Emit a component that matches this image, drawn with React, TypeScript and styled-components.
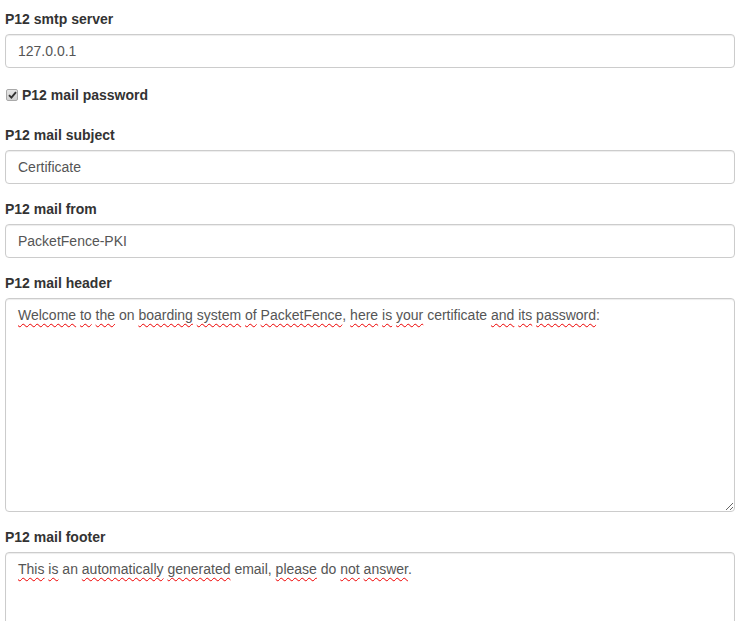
import React from 'react';
import styled, { createGlobalStyle } from 'styled-components';

const GlobalStyle = createGlobalStyle`
  html, body {
    margin: 0;
    padding: 0;
    overflow: hidden;
    background: #fff;
  }
  body {
    font-family: "Liberation Sans", Arial, sans-serif;
    font-size: 14px;
    line-height: 20px;
    color: #333;
  }
  * {
    box-sizing: border-box;
  }
`;

const Form = styled.form`
  display: flex;
  flex-direction: column;
  padding: 9px 11px 0 5px;
`;

const Group = styled.div`
  display: flex;
  flex-direction: column;
  margin-bottom: 15px;
`;

const Label = styled.label`
  display: block;
  font-weight: bold;
  margin-bottom: 5px;
`;

const Input = styled.input`
  display: block;
  width: 100%;
  height: 34px;
  padding: 6px 12px;
  font-family: inherit;
  font-size: 14px;
  line-height: 20px;
  color: #555;
  background: #fff;
  border: 1px solid #ccc;
  border-radius: 4px;
  box-shadow: inset 0 1px 1px rgba(0, 0, 0, 0.075);
  outline: none;
`;

const CheckRow = styled.label`
  display: flex;
  align-items: center;
  gap: 4px;
  height: 20px;
  margin: 2px 0 20px 1px;
  font-weight: bold;
`;

const CheckBox = styled.span`
  display: flex;
  align-items: center;
  justify-content: center;
  width: 12px;
  height: 12px;
  border: 1px solid #a9a9a9;
  border-radius: 2px;
  background: linear-gradient(#e6e6e6, #d2d2d2);
`;

const TextArea = styled.div`
  width: 100%;
  height: 214px;
  padding: 6px 12px;
  color: #555;
  background: #fff;
  border: 1px solid #ccc;
  border-radius: 4px;
  box-shadow: inset 0 1px 1px rgba(0, 0, 0, 0.075);
  resize: vertical;
  overflow: auto;
  white-space: pre-wrap;
`;

const Misspelled = styled.span`
  text-decoration: underline wavy #e00;
  text-decoration-thickness: 1px;
  text-underline-offset: 3px;
  text-decoration-skip-ink: none;
`;

// words flagged by the spell checker are marked with a leading '*'
const Spelled: React.FC<{ text: string }> = ({ text }) => (
  <>
    {text.split(' ').map((w, i, arr) => {
      const sep = i < arr.length - 1 ? ' ' : '';
      if (w.startsWith('*')) {
        const word = w.slice(1);
        const m = word.match(/^([A-Za-z]+)(.*)$/);
        return (
          <React.Fragment key={i}>
            <Misspelled>{m ? m[1] : word}</Misspelled>
            {m ? m[2] : ''}
            {sep}
          </React.Fragment>
        );
      }
      return <React.Fragment key={i}>{w + sep}</React.Fragment>;
    })}
  </>
);

const header =
  '*Welcome *to *the on *boarding *system *of *PacketFence, *here *is *your certificate *and *its *password:';
const footer =
  '*This *is an *automatically *generated email, *please do *not *answer.';

const App: React.FC = () => (
  <>
    <GlobalStyle />
    <Form onSubmit={e => e.preventDefault()}>
      <Group>
        <Label>P12 smtp server</Label>
        <Input defaultValue="127.0.0.1" />
      </Group>

      <CheckRow>
        <CheckBox>
          <svg width="9" height="8" viewBox="0 0 9 8">
            <path d="M1 4.2 L3.4 6.6 L8 1.2" fill="none" stroke="#333" strokeWidth="1.9" />
          </svg>
        </CheckBox>
        P12 mail password
      </CheckRow>

      <Group>
        <Label>P12 mail subject</Label>
        <Input defaultValue="Certificate" />
      </Group>

      <Group>
        <Label>P12 mail from</Label>
        <Input defaultValue="PacketFence-PKI" />
      </Group>

      <Group>
        <Label>P12 mail header</Label>
        <TextArea>
          <Spelled text={header} />
        </TextArea>
      </Group>

      <Group>
        <Label>P12 mail footer</Label>
        <TextArea>
          <Spelled text={footer} />
        </TextArea>
      </Group>
    </Form>
  </>
);

export default App;
